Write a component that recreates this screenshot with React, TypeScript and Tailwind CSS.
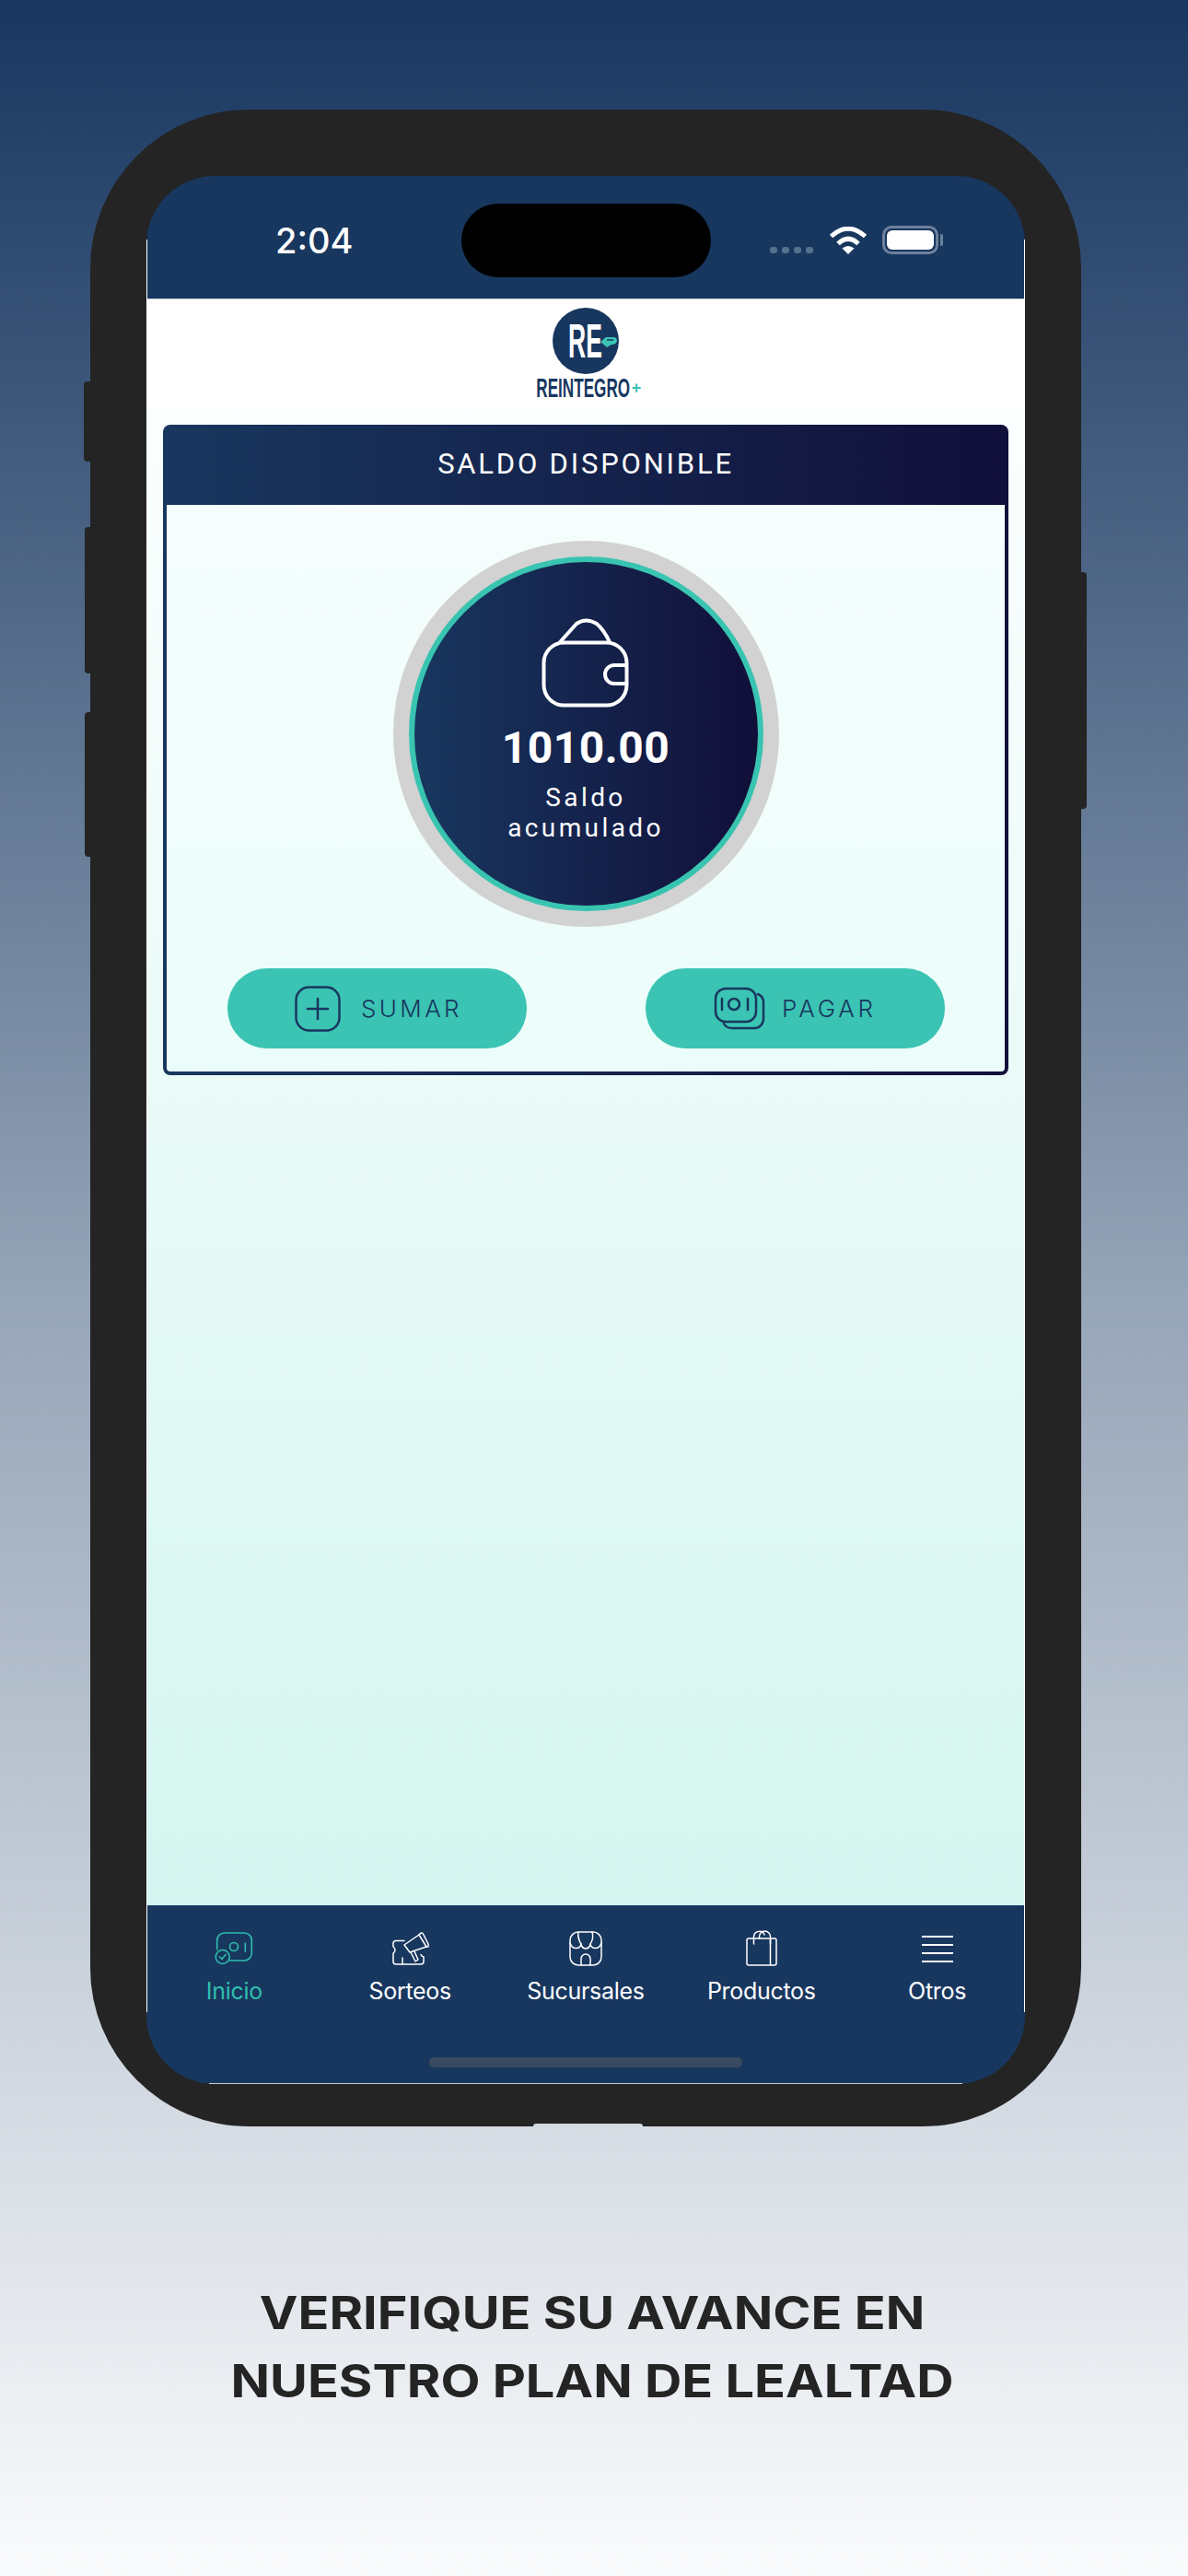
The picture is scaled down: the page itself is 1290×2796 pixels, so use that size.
const navy = "#18375f";

const WalletIcon = () => (
  <svg width="96" height="97" viewBox="0 0 96 97" fill="none" stroke="#fff" strokeWidth="4" strokeLinecap="round" strokeLinejoin="round">
    <rect x="2.5" y="26.5" width="90" height="68" rx="22" />
    <path d="M20 26 L38 6 Q48 -1 60 6 Q68 13 74 26" />
    <path d="M91 51 H79 a10 10 0 0 0 0 20 H91" />
  </svg>
);

const PlusIcon = () => (
  <svg width="50" height="50" viewBox="0 0 50 50" fill="none" stroke={navy} strokeWidth="2.5" strokeLinecap="round">
    <rect x="1.5" y="1.5" width="47" height="47" rx="14" />
    <path d="M25 14 V36 M14 25 H36" />
  </svg>
);

const MoneyIcon = () => (
  <svg width="56" height="48" viewBox="0 0 56 48" fill="none" stroke={navy} strokeWidth="2.5" strokeLinecap="round">
    <rect x="2" y="2" width="44" height="36" rx="11" />
    <path d="M11 40 a10 10 0 0 0 8 5 H44 a10 10 0 0 0 10 -10 V 17 a10 10 0 0 0 -6 -9" />
    <circle cx="22" cy="19" r="6" />
    <path d="M9 13 V25 M37 13 V25" />
  </svg>
);

const InicioIcon = () => (
  <svg width="44" height="38" viewBox="0 0 44 38" fill="none" stroke="#2fbfae" strokeWidth="1.6" strokeLinecap="round" strokeLinejoin="round">
    <path d="M3.7 20 V10 a8 8 0 0 1 8 -8 H33.3 a8 8 0 0 1 8 8 V24 a8 8 0 0 1 -8 8 H17" />
    <circle cx="9.7" cy="28" r="7.5" />
    <path d="M6.5 28 L9 30.5 L13 25.5" />
    <circle cx="22" cy="17" r="4.5" />
    <path d="M34.3 13 V22" />
  </svg>
);

const SorteosIcon = () => (
  <svg width="44" height="38" viewBox="0 0 44 38" fill="none" stroke="#fff" strokeWidth="1.5" strokeLinecap="round" strokeLinejoin="round">
    <path d="M16 10.5 H7 a3 3 0 0 0 -3 3 V17 a4.5 4.5 0 0 1 2 3.5 a4.5 4.5 0 0 1 -2 3.5 V33 a3 3 0 0 0 3 3 H34 a3 3 0 0 0 3 -3 V28 a4 4 0 0 1 -3 -2.5" />
    <path d="M14 29 V36" />
    <path d="M16 15 L32 4 L40 17 L22 23 Z" />
    <path d="M32 4 Q35 0 37 4 L42 14 Q43 18 40 17" />
    <path d="M23 23 L28 33 L31 31 L27 22" />
  </svg>
);

const StoreIcon = () => (
  <svg width="38" height="38" viewBox="0 0 38 38" fill="none" stroke="#fff" strokeWidth="1.5" strokeLinecap="round" strokeLinejoin="round">
    <rect x="2" y="1" width="34" height="36" rx="9" />
    <path d="M2 13 Q4 19 9 18.5 Q13 18.5 14 14 Q15 19 19 19 Q23 19 24 14 Q25 18.5 29 18.5 Q34 19 36 13" />
    <path d="M11 1 Q10 8 14 14 M26 1 Q28 8 24 14" />
    <path d="M14 37 V30 a5 5 0 0 1 10 0 V37" />
  </svg>
);

const BagIcon = () => (
  <svg width="36" height="40" viewBox="0 0 36 40" fill="none" stroke="#fff" strokeWidth="1.5" strokeLinecap="round" strokeLinejoin="round">
    <rect x="2" y="9" width="32" height="29" rx="2" />
    <path d="M27.5 9 V38" />
    <path d="M9.5 15 V7 a6 6 0 0 1 11.5 -2" />
    <path d="M15.5 9 V7 a6 6 0 0 1 12 0 V15" />
  </svg>
);

const MenuIcon = () => (
  <div className="flex h-[38px] w-[34px] flex-col justify-center gap-[7px]">
    <div className="h-[2px] bg-white" />
    <div className="h-[2px] bg-white" />
    <div className="h-[2px] bg-white" />
    <div className="h-[2px] bg-white" />
  </div>
);

const navItems = [
  { label: "Inicio", icon: <InicioIcon />, active: true },
  { label: "Sorteos", icon: <SorteosIcon /> },
  { label: "Sucursales", icon: <StoreIcon /> },
  { label: "Productos", icon: <BagIcon /> },
  { label: "Otros", icon: <MenuIcon /> },
];

const StatusBar = () => (
  <div className="flex h-[134px] shrink-0 items-start border-b border-[#c8d2de] bg-[#18375f] pl-[140px] text-white">
    <span className="mt-[46px] w-[84px] font-['Inter'] text-[38px] leading-[48px] font-medium">2:04</span>
    <div className="mt-[30px] ml-[118px] h-[80px] w-[271px] rounded-[40px] bg-black" />
    <div className="mt-[77px] ml-[64px] flex gap-[5px]">
      <div className="h-[7px] w-[8px] rounded-[3px] bg-[#56708f]" />
      <div className="h-[7px] w-[8px] rounded-[3px] bg-[#56708f]" />
      <div className="h-[7px] w-[8px] rounded-[3px] bg-[#56708f]" />
      <div className="h-[7px] w-[8px] rounded-[3px] bg-[#56708f]" />
    </div>
    <svg className="mt-[55px] ml-[17px]" width="42" height="30" viewBox="0 0 42 30" fill="none">
      <path d="M2.5 10.5 Q21 -6 39.5 10.5" stroke="#fff" strokeWidth="5" />
      <path d="M10 18.5 Q21 8 32 18.5" stroke="#fff" strokeWidth="5" />
      <path d="M14.5 23.5 Q21 18.5 27.5 23.5 L21 30 Z" fill="#fff" />
    </svg>
    <div className="mt-[54px] ml-[16px] flex items-center">
      <div className="h-[31px] w-[61px] rounded-[10px] border-[3px] border-[#6d819c] p-[2px]">
        <div className="h-full w-full rounded-[6px] bg-white" />
      </div>
      <div className="ml-[2px] h-[13px] w-[3px] rounded-r-[2px] bg-[#6d819c]" />
    </div>
  </div>
);

const Logo = () => (
  <div className="flex h-[118px] shrink-0 flex-col items-center bg-white pt-[9px]">
    <div className="relative flex h-[72px] w-[72px] items-center justify-center rounded-full bg-[#18375f]">
      <span className="mr-[1px] origin-center scale-x-[0.52] font-['Liberation_Sans'] text-[51px] leading-[51px] font-bold text-white">RE</span>
      <svg className="absolute top-[30px] left-[52px]" width="18" height="14" viewBox="0 0 18 14">
        <path d="M0 7 L6 2 H14 Q18 2 18 6 Q17 10 12 10 L7 13 Z" fill="#3bc4b3" />
        <path d="M7 5 H14" stroke="#18375f" strokeWidth="1.5" />
      </svg>
    </div>
    <div className="mt-[3px] ml-[5px] flex h-[24px] items-center">
      <div className="flex w-[105px] justify-center">
        <span className="shrink-0 origin-center scale-x-[0.59] font-['Liberation_Sans'] text-[29px] leading-[24px] font-bold whitespace-nowrap text-[#18375f]">
          REINTEGRO
        </span>
      </div>
      <span className="font-['Liberation_Sans'] text-[18px] leading-[14px] font-bold text-[#3bc4b3]">+</span>
    </div>
  </div>
);

const BalanceCard = () => (
  <div className="rounded-[8px] bg-gradient-to-r from-[#18375f] to-[#100f3a] px-[4px] pb-[4px]">
    <div className="flex h-[87px] items-center justify-center font-['Roboto'] text-[31px] tracking-[2.8px] text-white">
      SALDO DISPONIBLE
    </div>
    <div className="rounded-b-[4px] bg-gradient-to-b from-[#f5fefd] to-[#ebfdfa] pt-[39px] pb-[25px]">
      <div className="mx-auto h-[419px] w-[419px] rounded-full bg-[#d2d2d2] p-[17px]">
        <div className="flex h-full w-full flex-col items-center rounded-full border-[6px] border-[#38c4b0] bg-gradient-to-r from-[#18375f] to-[#100f3a] pt-[61px] font-['Roboto'] text-white">
          <WalletIcon />
          <div className="mt-[20px] text-[48px] leading-[48px] font-bold tracking-[0.5px]">1010.00</div>
          <div className="mt-[13px] text-center text-[28px] leading-[33px] tracking-[3.4px]">
            Saldo
            <br />
            acumulado
          </div>
        </div>
      </div>
      <div className="mx-[34px] mt-[27px] h-[1px] bg-[#f2f2f0]" />
      <div className="mt-[17px] flex justify-between pr-[65px] pl-[66px]">
        <div className="flex h-[87px] w-[325px] items-center gap-[22px] rounded-[43px] bg-[#3bc4b3] pl-[73px]">
          <PlusIcon />
          <span className="font-['Inter'] text-[26px] font-light tracking-[3.4px] text-[#18375f]">SUMAR</span>
        </div>
        <div className="flex h-[87px] w-[325px] items-center gap-[18px] rounded-[43px] bg-[#3bc4b3] pl-[74px]">
          <MoneyIcon />
          <span className="font-['Inter'] text-[26px] font-light tracking-[3.8px] text-[#18375f]">PAGAR</span>
        </div>
      </div>
    </div>
  </div>
);

const BottomNav = () => (
  <div className="h-[194px] shrink-0 bg-[#18375f] pt-[27px]">
    <div className="grid grid-cols-5">
      {navItems.map((item) => (
        <div key={item.label} className="flex flex-col items-center">
          <div className="flex h-[40px] items-center justify-center">{item.icon}</div>
          <span
            className={
              item.active
                ? "mt-[10px] font-['Inter'] text-[25px] leading-[32px] tracking-[-0.3px] text-[#2fbfae]"
                : "mt-[10px] font-['Inter'] text-[25px] leading-[32px] tracking-[-0.3px] text-white"
            }
          >
            {item.label}
          </span>
        </div>
      ))}
    </div>
    <div className="mx-auto mt-[56px] h-[11px] w-[340px] rounded-[5px] bg-[#3a4a60]" />
  </div>
);

export default function App() {
  return (
    <div className="h-[2796px] w-[1290px] overflow-hidden bg-gradient-to-b from-[#183760] via-[#95a4b7] via-[50%] to-[#fafbfc] pt-[119px]">
      <div className="relative ml-[98px] h-[2189px] w-[1076px] rounded-[172px] bg-[#242424] pt-[72px] pr-[61px] pb-[46px] pl-[61px]">
        <div className="absolute top-[295px] -left-[7px] h-[87px] w-[8px] rounded-l-[4px] bg-[#242424]" />
        <div className="absolute top-[453px] -left-[6px] h-[159px] w-[7px] rounded-l-[4px] bg-[#242424]" />
        <div className="absolute top-[654px] -left-[6px] h-[157px] w-[7px] rounded-l-[4px] bg-[#242424]" />
        <div className="absolute top-[502px] -right-[6px] h-[257px] w-[7px] rounded-r-[4px] bg-[#242424]" />
        <div className="absolute bottom-0 left-[481px] h-[3px] w-[119px] rounded-t-[6px] bg-[#d5dae3]" />

        <div className="relative h-full">
          <div className="flex h-full flex-col overflow-hidden rounded-[74px]">
            <StatusBar />
            <Logo />
            <div className="flex-1 bg-gradient-to-b from-[#fbfefe] to-[#d4f6f0] px-[18px] pt-[18px]">
              <BalanceCard />
            </div>
            <BottomNav />
          </div>
          <div className="absolute top-[69px] bottom-[78px] left-0 w-[1px] bg-white" />
          <div className="absolute top-[69px] right-0 bottom-[78px] w-[1px] bg-white" />
          <div className="absolute right-[68px] bottom-0 left-[68px] h-[1px] bg-[#c9ced6]" />
        </div>
      </div>

      <div className="mt-[166px] w-[1286px] text-center font-['Inter'] text-[49px] leading-[74px] font-bold text-[#242424]">
        <div className="origin-center scale-x-[1.14]">VERIFIQUE SU AVANCE EN</div>
        <div className="origin-center scale-x-[1.14]">NUESTRO PLAN DE LEALTAD</div>
      </div>
    </div>
  );
}
